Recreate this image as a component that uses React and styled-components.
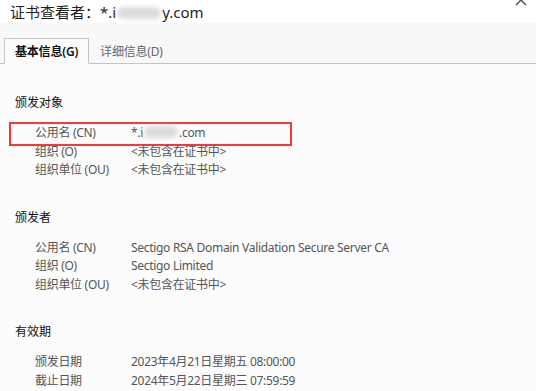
import React from 'react'
import styled, { createGlobalStyle } from 'styled-components'

const GlobalStyle = createGlobalStyle`
  html, body {
    margin: 0;
    padding: 0;
    background: #fcfcfc;
    overflow: hidden;
  }
  body {
    font-family: "Noto Sans", "Noto Sans CJK SC", sans-serif;
  }
`

const Window = styled.div`
  width: 536px;
  height: 391px;
  background: #fcfcfc;
  overflow: hidden;
`

const TitleBar = styled.div`
  height: 23px;
  display: flex;
  align-items: flex-start;
  justify-content: space-between;
  background: #ffffff;
  padding: 0 8px 0 10px;
`

const Title = styled.div`
  font-size: 15px;
  line-height: 24px;
  color: #1e1e1e;
  white-space: nowrap;
`

const Blur = styled.span`
  display: inline-block;
  width: ${p => p.w || 40}px;
  height: 12px;
  margin: 0 1px;
  vertical-align: -1px;
  background: #dcdcdc;
  border-radius: 6px;
  filter: blur(2px);
`

const Close = styled.div`
  margin-top: -10px;
  width: 14px;
  height: 14px;
`

const TabBar = styled.div`
  height: 40px;
  display: flex;
  align-items: flex-end;
  padding-left: 4px;
  background: #f8f8f8;
  border-bottom: 1px solid #c4c4c4;
`

const Tab = styled.div`
  height: 24px;
  margin-bottom: -1px;
  padding: 0 10px;
  display: flex;
  align-items: center;
  font-size: 12px;
  font-weight: ${p => (p.active ? 600 : 400)};
  color: ${p => (p.active ? '#111' : '#666')};
  background: ${p => (p.active ? '#fcfcfc' : 'transparent')};
  border: 1px solid ${p => (p.active ? '#c4c4c4' : 'transparent')};
  border-bottom-color: ${p => (p.active ? '#fcfcfc' : 'transparent')};
  letter-spacing: -0.2px;
`

const Content = styled.div`
  padding: 30px 0 0 15px;
  display: flex;
  flex-direction: column;
  gap: 29px;
`

const Section = styled.section`
  display: flex;
  flex-direction: column;
`

const SectionTitle = styled.div`
  font-size: 12px;
  line-height: 18px;
  color: #111;
  margin-bottom: 12px;
`

const Row = styled.div`
  position: relative;
  display: grid;
  grid-template-columns: 96px 1fr;
  padding-left: 20px;
  font-size: 12px;
  line-height: 18.5px;
  letter-spacing: -0.3px;
  color: #555;
  white-space: nowrap;

  ${p =>
    p.highlight &&
    `
    &::before {
      content: '';
      position: absolute;
      left: -6px;
      top: -2px;
      width: 279px;
      height: 20px;
      border: 2px solid #ef3a3e;
    }
  `}
`

const sections = [
  {
    title: '颁发对象',
    rows: [
      ['公用名 (CN)', 'domain', true],
      ['组织 (O)', '<未包含在证书中>'],
      ['组织单位 (OU)', '<未包含在证书中>'],
    ],
  },
  {
    title: '颁发者',
    rows: [
      ['公用名 (CN)', 'Sectigo RSA Domain Validation Secure Server CA'],
      ['组织 (O)', 'Sectigo Limited'],
      ['组织单位 (OU)', '<未包含在证书中>'],
    ],
  },
  {
    title: '有效期',
    rows: [
      ['颁发日期', '2023年4月21日星期五 08:00:00'],
      ['截止日期', '2024年5月22日星期三 07:59:59'],
    ],
  },
]

const Domain = () => (
  <>
    *.i<Blur w={34} />.com
  </>
)

export default function App() {
  return (
    <Window>
      <GlobalStyle />
      <TitleBar>
        <Title>
          证书查看者：*.i<Blur w={44} />y.com
        </Title>
        <Close>
          <svg width="14" height="14" viewBox="0 0 14 14">
            <path d="M2 2 L12 12 M12 2 L2 12" stroke="#555" strokeWidth="1.5" />
          </svg>
        </Close>
      </TitleBar>
      <TabBar>
        <Tab active>基本信息(G)</Tab>
        <Tab>详细信息(D)</Tab>
      </TabBar>
      <Content>
        {sections.map(s => (
          <Section key={s.title}>
            <SectionTitle>{s.title}</SectionTitle>
            {s.rows.map(([label, value, hl]) => (
              <Row key={label} highlight={hl}>
                <span>{label}</span>
                <span>{value === 'domain' ? <Domain /> : value}</span>
              </Row>
            ))}
          </Section>
        ))}
      </Content>
    </Window>
  )
}
